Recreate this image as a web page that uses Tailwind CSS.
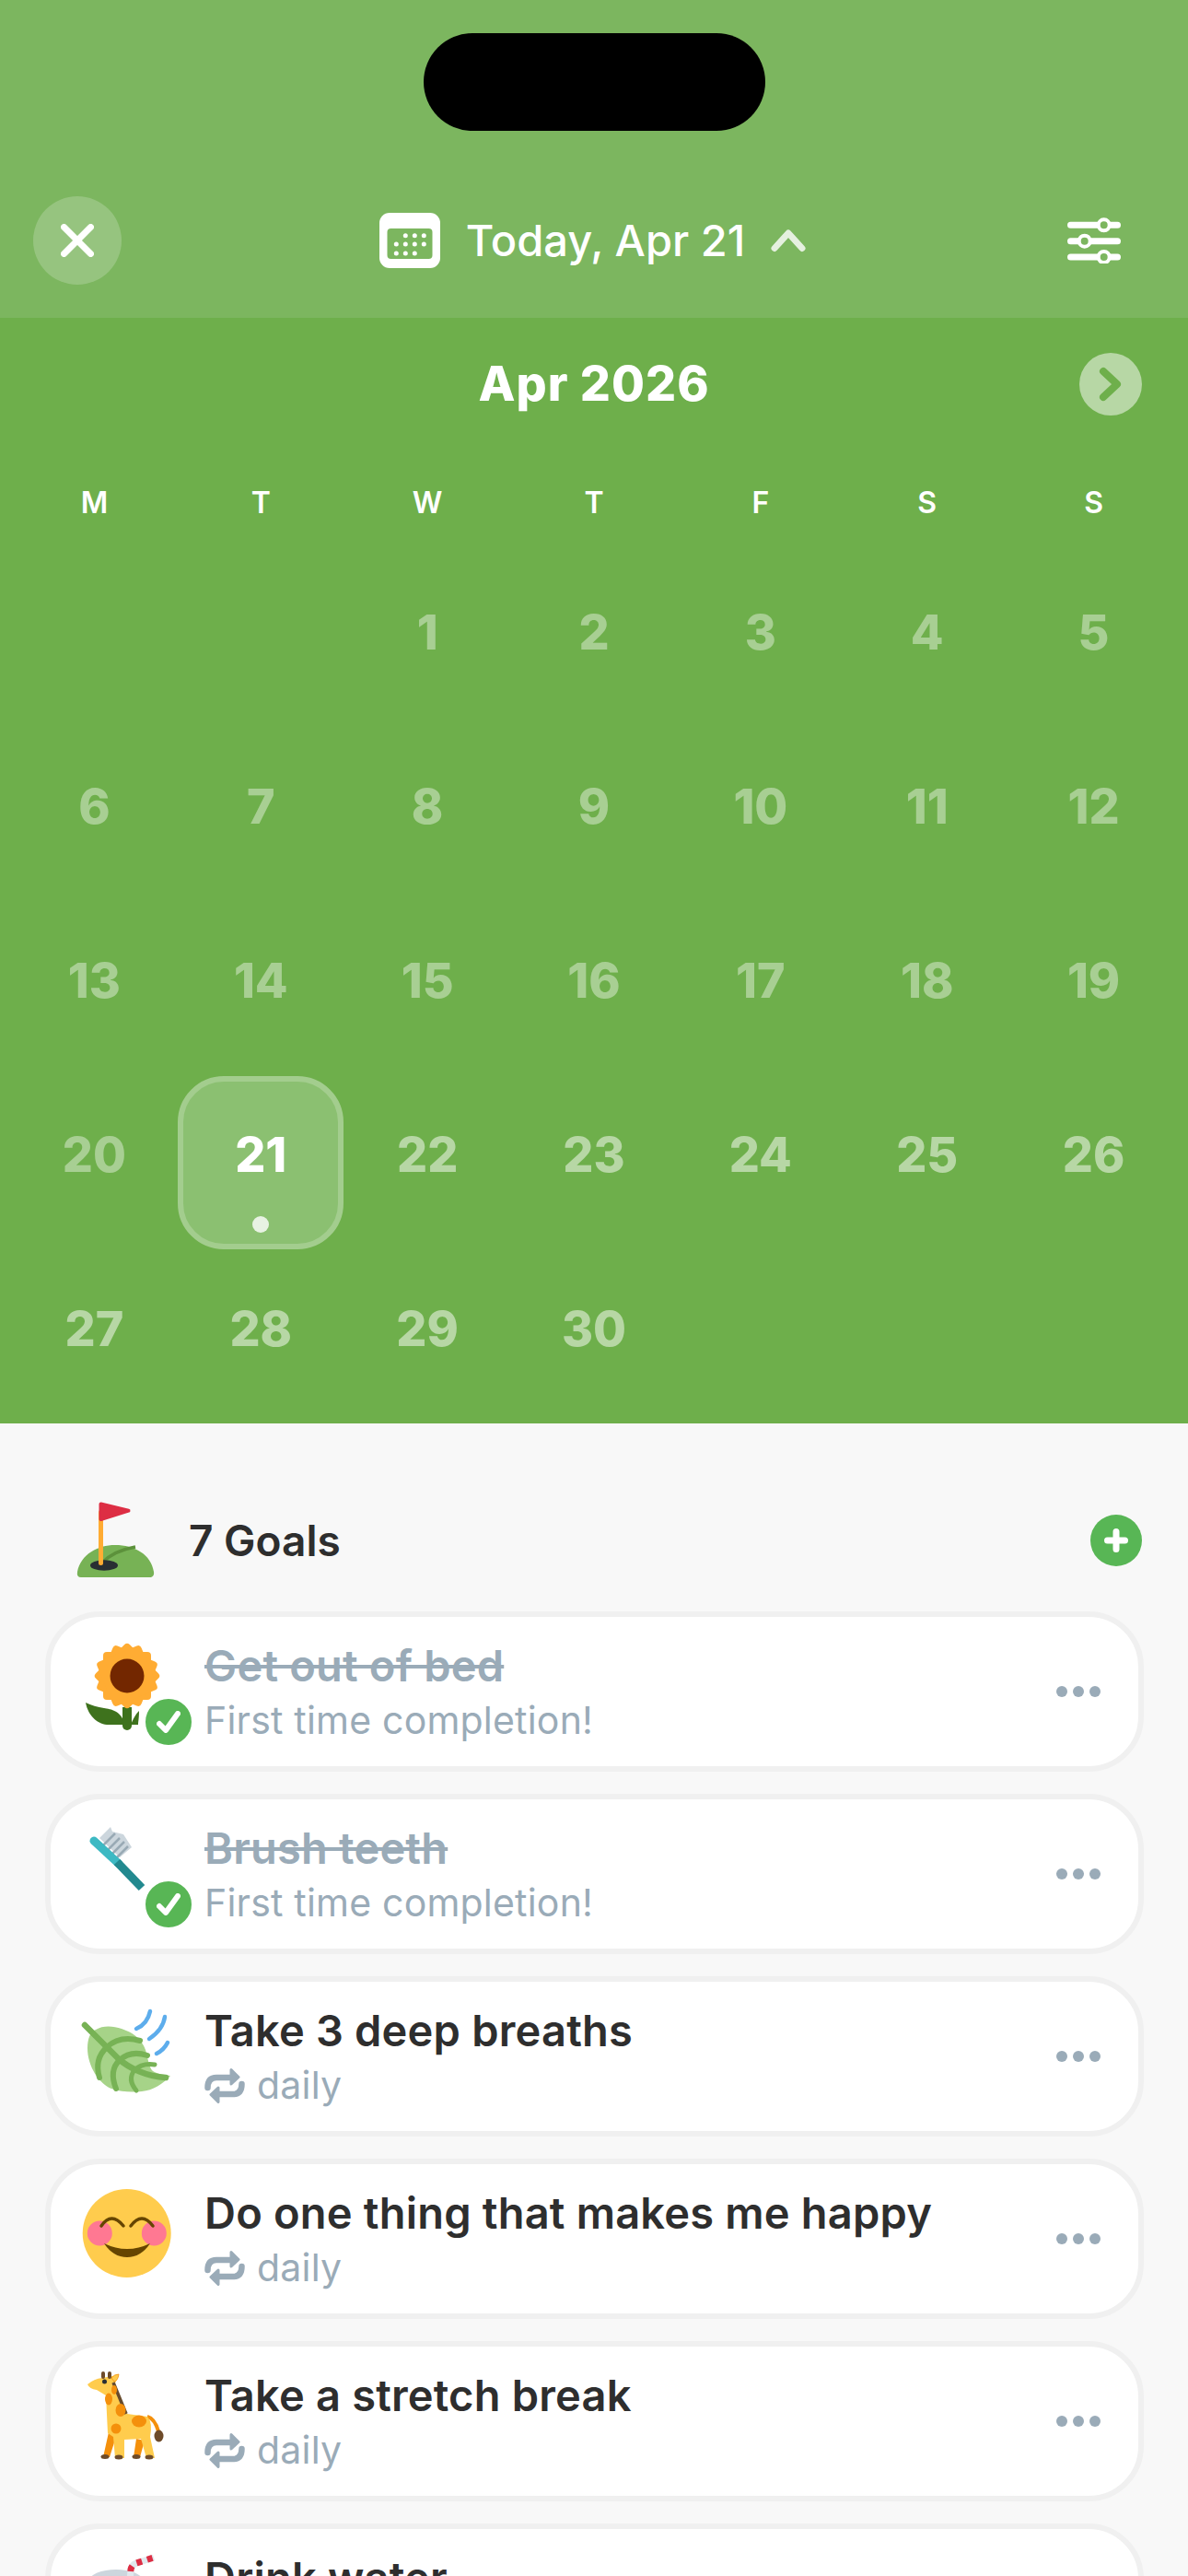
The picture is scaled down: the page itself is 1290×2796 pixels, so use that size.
<!DOCTYPE html>
<html lang="en">
<head>
  <meta charset="UTF-8" />
  <title>Goals</title>
  <script src="https://cdn.jsdelivr.net/npm/@tailwindcss/browser@4"></script>
</head>
<body class="w-[1290px] h-[2796px] overflow-hidden bg-[#f8f8f8] font-[Inter,sans-serif] text-[#2e2e2e]">

  <!-- Top bar -->
  <header class="h-[345px] bg-[#7cb65f] pt-[36px]">
    <div class="mx-auto w-[371px] h-[106px] rounded-[53px] bg-black"></div>
    <div class="mt-[71px] flex items-center justify-between pl-[36px] pr-[73px]">
      <button class="w-[96px] h-[96px] rounded-full bg-white/20 flex items-center justify-center">
        <svg class="w-[36px] h-[36px]" viewBox="0 0 36 36" fill="none" stroke="#fff" stroke-width="7" stroke-linecap="round"><path d="M3.500 3.500 32.500 32.500M32.500 3.500 3.500 32.500"/></svg>
      </button>
      <div class="flex items-center mr-[4px]">
        <svg class="w-[66px] h-[60px]" viewBox="0 0 66 60">
          <rect width="66" height="60" rx="11" fill="#fff"/>
          <rect x="8.500" y="17" width="49" height="33" rx="4" fill="#7cb65f"/>
          <g fill="#fff">
            <circle cx="28.300" cy="24.700" r="2.500"/><circle cx="38.300" cy="24.700" r="2.500"/><circle cx="48.300" cy="24.700" r="2.500"/>
            <circle cx="18.300" cy="34" r="2.500"/><circle cx="28.300" cy="34" r="2.500"/><circle cx="38.300" cy="34" r="2.500"/><circle cx="48.300" cy="34" r="2.500"/>
            <circle cx="18.300" cy="44" r="2.500"/><circle cx="28.300" cy="44" r="2.500"/><circle cx="38.300" cy="44" r="2.500"/>
          </g>
        </svg>
        <span class="ml-[28px] text-[47px] leading-[60px] font-medium text-white">Today, Apr 21</span>
        <svg class="ml-[28px] w-[38px] h-[26px]" viewBox="0 0 38 26" fill="none" stroke="#fff" stroke-opacity=".8" stroke-width="7" stroke-linecap="round" stroke-linejoin="round"><path d="M4 21.500 19 5l15 16.500"/></svg>
      </div>
      <svg class="w-[58px] h-[50px]" viewBox="0 0 58 50" fill="none">
        <g stroke="#fff" stroke-width="7" stroke-linecap="round"><path d="M3.500 8.300h51M3.500 25.700h51M3.500 43h51"/></g>
        <g fill="#7cb65f" stroke="#fff" stroke-width="4"><circle cx="39.700" cy="8.300" r="6"/><circle cx="18.700" cy="25.700" r="6"/><circle cx="39.700" cy="43" r="6"/></g>
      </svg>
    </div>
  </header>

  <!-- Calendar -->
  <section class="h-[1200px] bg-[#6eaf4b]">
    <div class="pt-[38px] pl-[50px] pr-[50px] flex items-center justify-between">
      <div class="w-[68px]"></div>
      <h2 class="text-[52px] leading-[68px] font-extrabold tracking-[1px] text-white">Apr 2026</h2>
      <button class="w-[68px] h-[68px] rounded-full bg-white/50 flex items-center justify-center">
        <svg class="w-[26px] h-[38px]" viewBox="0 0 26 38" fill="none" stroke="#6eaf4b" stroke-width="8" stroke-linecap="round" stroke-linejoin="round"><path d="M5 5 20 19 5 33"/></svg>
      </button>
    </div>

    <div class="mt-[75px] px-[12px] grid grid-cols-7 text-center text-[32px] leading-[40px] font-semibold text-white">
      <div>M</div><div>T</div><div>W</div><div>T</div><div>F</div><div>S</div><div>S</div>
    </div>

    <div class="mt-[26px] px-[12px] grid grid-cols-7 auto-rows-[189px] text-[52px] font-extrabold">
      <div></div><div></div>
      <div class="flex items-center justify-center text-white/40">1</div>
      <div class="flex items-center justify-center text-white/40">2</div>
      <div class="flex items-center justify-center text-white/40">3</div>
      <div class="flex items-center justify-center text-white/40">4</div>
      <div class="flex items-center justify-center text-white/40">5</div>
      <div class="flex items-center justify-center text-white/40">6</div>
      <div class="flex items-center justify-center text-white/40">7</div>
      <div class="flex items-center justify-center text-white/40">8</div>
      <div class="flex items-center justify-center text-white/40">9</div>
      <div class="flex items-center justify-center text-white/40">10</div>
      <div class="flex items-center justify-center text-white/40">11</div>
      <div class="flex items-center justify-center text-white/40">12</div>
      <div class="flex items-center justify-center text-white/40">13</div>
      <div class="flex items-center justify-center text-white/40">14</div>
      <div class="flex items-center justify-center text-white/40">15</div>
      <div class="flex items-center justify-center text-white/40">16</div>
      <div class="flex items-center justify-center text-white/40">17</div>
      <div class="flex items-center justify-center text-white/40">18</div>
      <div class="flex items-center justify-center text-white/40">19</div>
      <div class="flex items-center justify-center text-white/40">20</div>
      <div class="relative flex items-center justify-center text-white">
        <div class="absolute left-0 top-[9px] w-[180px] h-[188px] rounded-[50px] border-[6px] border-[#a3cd8e] bg-[#8bc071]">
          <div class="absolute left-[75px] bottom-[12px] w-[18px] h-[18px] rounded-full bg-[#e8f2e3]"></div>
        </div>
        <span class="relative">21</span>
      </div>
      <div class="flex items-center justify-center text-white/50">22</div>
      <div class="flex items-center justify-center text-white/50">23</div>
      <div class="flex items-center justify-center text-white/50">24</div>
      <div class="flex items-center justify-center text-white/50">25</div>
      <div class="flex items-center justify-center text-white/50">26</div>
      <div class="flex items-center justify-center text-white/50">27</div>
      <div class="flex items-center justify-center text-white/50">28</div>
      <div class="flex items-center justify-center text-white/50">29</div>
      <div class="flex items-center justify-center text-white/50">30</div>
    </div>
  </section>

  <!-- Goals -->
  <section class="pt-[84px]">
    <div class="h-[85px] pl-[84px] pr-[50px] flex items-center">
      <svg class="w-[83px] h-[85px] overflow-visible" viewBox="0 0 83 85">
        <path d="M4 83Q-1 83 0 77C4 58 22 48 41 48 62 48 80 58 83 77 84 83 79 83 79 83Z" fill="#77b255"/>
        <path d="M27 67Q40 54 63 50" fill="none" stroke="#5c913b" stroke-width="3.500"/>
        <ellipse cx="29" cy="70" rx="15" ry="5.700" fill="#292f33"/>
        <rect x="23" y="10" width="5" height="60" rx="2.500" fill="#ffac33"/>
        <path d="M25.500 3.500 55.500 10.700 25.500 20Z" fill="#dd2e44" stroke="#dd2e44" stroke-width="4" stroke-linejoin="round"/>
      </svg>
      <span class="ml-[38px] text-[46px] leading-[60px] font-semibold">7 Goals</span>
      <button class="ml-auto w-[56px] h-[56px] rounded-full bg-[#58b655] flex items-center justify-center">
        <svg class="w-[26px] h-[26px]" viewBox="0 0 26 26" fill="none" stroke="#fff" stroke-width="7" stroke-linecap="round"><path d="M13 3.500v19M3.500 13h19"/></svg>
      </button>
    </div>

    <ul class="mt-[35px] ml-[49px] mr-[48px] flex flex-col gap-[24px]">
      <!-- Get out of bed -->
      <li class="h-[174px] shrink-0 rounded-[60px] border-[6px] border-[#f0f0f0] bg-white flex items-center pl-[33px] pr-[41px]">
        <div class="relative w-[100px] h-[110px] shrink-0">
          <svg class="w-[100px] h-[110px] overflow-visible" viewBox="0 0 100 110">
            <path d="M45 72h10v20a5 5 0 0 1-10 0Z" fill="#3e721d"/>
            <path d="M5 67C8 83 20 92 32 91H47C45 76 32 74 25 73 18 72 11 70 5 67Z" fill="#3e721d"/>
            <path d="M54 91C57 84 59 80 63 76 63 84 62 88 62 91Z" fill="#3e721d"/>
            <g fill="#ffac33">
              <rect x="24" y="12" width="52" height="52" rx="4"/>
              <rect x="24" y="12" width="52" height="52" rx="4" transform="rotate(22.500 50 38)"/>
              <rect x="24" y="12" width="52" height="52" rx="4" transform="rotate(45 50 38)"/>
              <rect x="24" y="12" width="52" height="52" rx="4" transform="rotate(67.500 50 38)"/>
            </g>
            <circle cx="50" cy="38" r="18.500" fill="#732700"/>
          </svg>
          <div class="absolute left-[67px] top-[60px] w-[56px] h-[56px] rounded-full bg-[#58b655] border-[3px] border-white flex items-center justify-center">
            <svg class="w-[26px] h-[24px]" viewBox="0 0 26 24" fill="none" stroke="#fff" stroke-width="6" stroke-linecap="round" stroke-linejoin="round"><path d="M3 14 10 21 23 3"/></svg>
          </div>
        </div>
        <div class="ml-[34px] pt-[3px] flex-1">
          <div class="text-[47px] leading-[57px] font-semibold tracking-[0.2px] text-[#9aabb8] line-through">Get out of bed</div>
          <div class="mt-[3px] text-[41px] leading-[57px] tracking-[0.2px] text-[#9aabb8]">First time completion!</div>
        </div>
        <div class="flex gap-[6px]"><i class="w-[12px] h-[12px] rounded-full bg-[#9aabb8]"></i><i class="w-[12px] h-[12px] rounded-full bg-[#9aabb8]"></i><i class="w-[12px] h-[12px] rounded-full bg-[#9aabb8]"></i></div>
      </li>

      <!-- Brush teeth -->
      <li class="h-[174px] shrink-0 rounded-[60px] border-[6px] border-[#f0f0f0] bg-white flex items-center pl-[33px] pr-[41px]">
        <div class="relative w-[100px] h-[110px] shrink-0">
          <svg class="w-[100px] h-[110px] overflow-visible" viewBox="0 0 100 110">
            <path d="M20 16 32 4 34 9 46 12 55 26 42 37Z" fill="#ccd6dd"/>
            <path d="M24 24 37 11M29 29 42 16M34 33 47 20M39 37 51 25" stroke="#99aab5" stroke-width="2.500" fill="none"/>
            <path d="M14 19 41 44" stroke="#3db9c3" stroke-width="9" stroke-linecap="round" fill="none"/>
            <path d="M39 42 66 70" stroke="#22898f" stroke-width="9" fill="none"/>
          </svg>
          <div class="absolute left-[67px] top-[60px] w-[56px] h-[56px] rounded-full bg-[#58b655] border-[3px] border-white flex items-center justify-center">
            <svg class="w-[26px] h-[24px]" viewBox="0 0 26 24" fill="none" stroke="#fff" stroke-width="6" stroke-linecap="round" stroke-linejoin="round"><path d="M3 14 10 21 23 3"/></svg>
          </div>
        </div>
        <div class="ml-[34px] pt-[3px] flex-1">
          <div class="text-[47px] leading-[57px] font-semibold tracking-[0.2px] text-[#9aabb8] line-through">Brush teeth</div>
          <div class="mt-[3px] text-[41px] leading-[57px] tracking-[0.2px] text-[#9aabb8]">First time completion!</div>
        </div>
        <div class="flex gap-[6px]"><i class="w-[12px] h-[12px] rounded-full bg-[#9aabb8]"></i><i class="w-[12px] h-[12px] rounded-full bg-[#9aabb8]"></i><i class="w-[12px] h-[12px] rounded-full bg-[#9aabb8]"></i></div>
      </li>

      <!-- Take 3 deep breaths -->
      <li class="h-[174px] shrink-0 rounded-[60px] border-[6px] border-[#f0f0f0] bg-white flex items-center pl-[33px] pr-[41px]">
        <svg class="w-[100px] h-[110px] shrink-0 overflow-visible" viewBox="0 0 100 110">
          <path d="M7 46C7 36 10 28 16 26 24 21 35 22 44 25 56 29 66 36 70 48 73 58 74 68 78 71 84 75 92 75 97 76 89 85 78 92 66 93 56 94 44 94 33 90 20 85 7 66 7 46Z" fill="#a6d388"/>
          <g fill="none" stroke="#77b255" stroke-linecap="round">
            <path d="M4 21 40 57C52 68 72 77 92 78" stroke-width="6.500"/>
            <path d="M28 45Q14 58 20 78" stroke-width="6"/>
            <path d="M28 45Q42 32 64 38" stroke-width="6"/>
            <path d="M42 59Q30 70 38 90" stroke-width="6"/>
            <path d="M42 59Q54 48 72 54" stroke-width="6"/>
            <path d="M58 70Q50 80 60 92" stroke-width="5"/>
            <path d="M58 70Q66 62 80 64" stroke-width="5"/>
          </g>
          <g fill="none" stroke="#5dadec" stroke-width="4.500" stroke-linecap="round">
            <path d="M60 25Q72 20 75 6"/>
            <path d="M74 36Q89 26 91 12"/>
            <path d="M82 52Q90 48 94 40"/>
          </g>
        </svg>
        <div class="ml-[34px] pt-[3px] flex-1">
          <div class="text-[47px] leading-[57px] font-semibold tracking-[0.2px]">Take 3 deep breaths</div>
          <div class="mt-[3px] flex items-center h-[57px] text-[41px] tracking-[0.2px] text-[#9aabb8]">
            <svg class="w-[44px] h-[38px]" viewBox="0 0 44 38"><g fill="none" stroke="#9aabb8" stroke-width="6.500" stroke-linecap="round"><path d="M3.500 21Q3.500 10 13 10H30"/><path d="M40.500 17Q40.500 28 31 28H14"/></g><path d="M29 1.500 37 9.500 29 17Z" fill="#9aabb8" stroke="#9aabb8" stroke-width="3" stroke-linejoin="round"/><path d="M15 21 7 28.500 15 36.500Z" fill="#9aabb8" stroke="#9aabb8" stroke-width="3" stroke-linejoin="round"/></svg>
            <span class="ml-[13px]">daily</span>
          </div>
        </div>
        <div class="flex gap-[6px]"><i class="w-[12px] h-[12px] rounded-full bg-[#9aabb8]"></i><i class="w-[12px] h-[12px] rounded-full bg-[#9aabb8]"></i><i class="w-[12px] h-[12px] rounded-full bg-[#9aabb8]"></i></div>
      </li>

      <!-- Do one thing -->
      <li class="h-[174px] shrink-0 rounded-[60px] border-[6px] border-[#f0f0f0] bg-white flex items-center pl-[33px] pr-[41px]">
        <svg class="w-[100px] h-[110px] shrink-0 overflow-visible" viewBox="0 0 100 110">
          <circle cx="49.700" cy="49" r="48" fill="#ffcc4d"/>
          <circle cx="20.300" cy="49" r="13.500" fill="#ff7892"/>
          <circle cx="79.300" cy="49" r="13.500" fill="#ff7892"/>
          <g fill="none" stroke="#664500" stroke-width="3.500" stroke-linecap="round">
            <path d="M22 41Q33 25 46 41"/>
            <path d="M54 41Q66 25 78 41"/>
          </g>
          <path d="M25 60Q50 72 75 60 65 75 50 75 35 75 25 60Z" fill="#664500"/>
        </svg>
        <div class="ml-[34px] pt-[3px] flex-1">
          <div class="text-[47px] leading-[57px] font-semibold tracking-[0.2px]">Do one thing that makes me happy</div>
          <div class="mt-[3px] flex items-center h-[57px] text-[41px] tracking-[0.2px] text-[#9aabb8]">
            <svg class="w-[44px] h-[38px]" viewBox="0 0 44 38"><g fill="none" stroke="#9aabb8" stroke-width="6.500" stroke-linecap="round"><path d="M3.500 21Q3.500 10 13 10H30"/><path d="M40.500 17Q40.500 28 31 28H14"/></g><path d="M29 1.500 37 9.500 29 17Z" fill="#9aabb8" stroke="#9aabb8" stroke-width="3" stroke-linejoin="round"/><path d="M15 21 7 28.500 15 36.500Z" fill="#9aabb8" stroke="#9aabb8" stroke-width="3" stroke-linejoin="round"/></svg>
            <span class="ml-[13px]">daily</span>
          </div>
        </div>
        <div class="flex gap-[6px]"><i class="w-[12px] h-[12px] rounded-full bg-[#9aabb8]"></i><i class="w-[12px] h-[12px] rounded-full bg-[#9aabb8]"></i><i class="w-[12px] h-[12px] rounded-full bg-[#9aabb8]"></i></div>
      </li>

      <!-- Take a stretch break -->
      <li class="h-[174px] shrink-0 rounded-[60px] border-[6px] border-[#f0f0f0] bg-white flex items-center pl-[33px] pr-[41px]">
        <svg class="w-[100px] h-[110px] shrink-0 overflow-visible" viewBox="0 0 100 110">
          <path d="M30 67 24 94H31L38 72ZM60 74 57 94H64L69 76Z" fill="#f4900c"/>
          <path d="M72 50Q80 52 84 66" fill="none" stroke="#f4900c" stroke-width="4"/>
          <ellipse cx="84.500" cy="71" rx="5" ry="6.500" fill="#6e4b2a"/>
          <path d="M7 15Q14 9 23 8L34 6 40 6 37 14 50 47 72 50Q78 56 75 72L80 95H71L65 74 47 75 47 95H37L35 72 29 68 27 27Q22 24 17 21 9 20 7 15Z" fill="#ffcc4d"/>
          <path d="M35 13 49 47" fill="none" stroke="#664b2e" stroke-width="3.500"/>
          <g fill="#f4900c">
            <ellipse cx="30" cy="31" rx="4" ry="6.500"/>
            <ellipse cx="43" cy="43" rx="5.500" ry="7"/>
            <ellipse cx="63" cy="55" rx="8" ry="6.500"/>
            <ellipse cx="38" cy="63" rx="5.500" ry="5.500"/>
            <ellipse cx="36" cy="21" rx="3" ry="5"/>
          </g>
          <g fill="#6e4b2a">
            <rect x="22" y="1" width="4" height="8" rx="2"/><rect x="29" y="1" width="4" height="8" rx="2"/>
            <ellipse cx="26" cy="93.500" rx="4.500" ry="2.500"/><ellipse cx="41" cy="94" rx="4.500" ry="2.500"/>
            <ellipse cx="60" cy="93.500" rx="4.500" ry="2.500"/><ellipse cx="74" cy="94" rx="4.500" ry="2.500"/>
          </g>
          <circle cx="25.500" cy="12" r="2.500" fill="#292f33"/>
          <path d="M33 8Q36 4 41 4 40 11 36 12Z" fill="#ffcc4d" stroke="#f4900c" stroke-width=".8"/>
        </svg>
        <div class="ml-[34px] pt-[3px] flex-1">
          <div class="text-[47px] leading-[57px] font-semibold tracking-[0.2px]">Take a stretch break</div>
          <div class="mt-[3px] flex items-center h-[57px] text-[41px] tracking-[0.2px] text-[#9aabb8]">
            <svg class="w-[44px] h-[38px]" viewBox="0 0 44 38"><g fill="none" stroke="#9aabb8" stroke-width="6.500" stroke-linecap="round"><path d="M3.500 21Q3.500 10 13 10H30"/><path d="M40.500 17Q40.500 28 31 28H14"/></g><path d="M29 1.500 37 9.500 29 17Z" fill="#9aabb8" stroke="#9aabb8" stroke-width="3" stroke-linejoin="round"/><path d="M15 21 7 28.500 15 36.500Z" fill="#9aabb8" stroke="#9aabb8" stroke-width="3" stroke-linejoin="round"/></svg>
            <span class="ml-[13px]">daily</span>
          </div>
        </div>
        <div class="flex gap-[6px]"><i class="w-[12px] h-[12px] rounded-full bg-[#9aabb8]"></i><i class="w-[12px] h-[12px] rounded-full bg-[#9aabb8]"></i><i class="w-[12px] h-[12px] rounded-full bg-[#9aabb8]"></i></div>
      </li>

      <!-- Drink water -->
      <li class="h-[174px] shrink-0 rounded-[60px] border-[6px] border-[#f0f0f0] bg-white flex items-center pl-[33px] pr-[41px]">
        <svg class="w-[100px] h-[110px] shrink-0 overflow-visible" viewBox="0 0 100 110">
          <ellipse cx="38" cy="30" rx="29" ry="12" fill="#ccd6dd"/>
          <path d="M53 32 54 18Q55 13 60 11L79 5" fill="none" stroke="#e1e8ed" stroke-width="7"/>
          <path d="M53 32 54 18Q55 13 60 11L79 5" fill="none" stroke="#dd2e44" stroke-width="7" stroke-dasharray="6 6"/>
        </svg>
        <div class="ml-[34px] pt-[3px] flex-1">
          <div class="text-[47px] leading-[57px] font-semibold tracking-[0.2px]">Drink water</div>
          <div class="mt-[3px] flex items-center h-[57px] text-[41px] tracking-[0.2px] text-[#9aabb8]"><span class="ml-[57px]">daily</span></div>
        </div>
      </li>
    </ul>
  </section>
</body>
</html>
